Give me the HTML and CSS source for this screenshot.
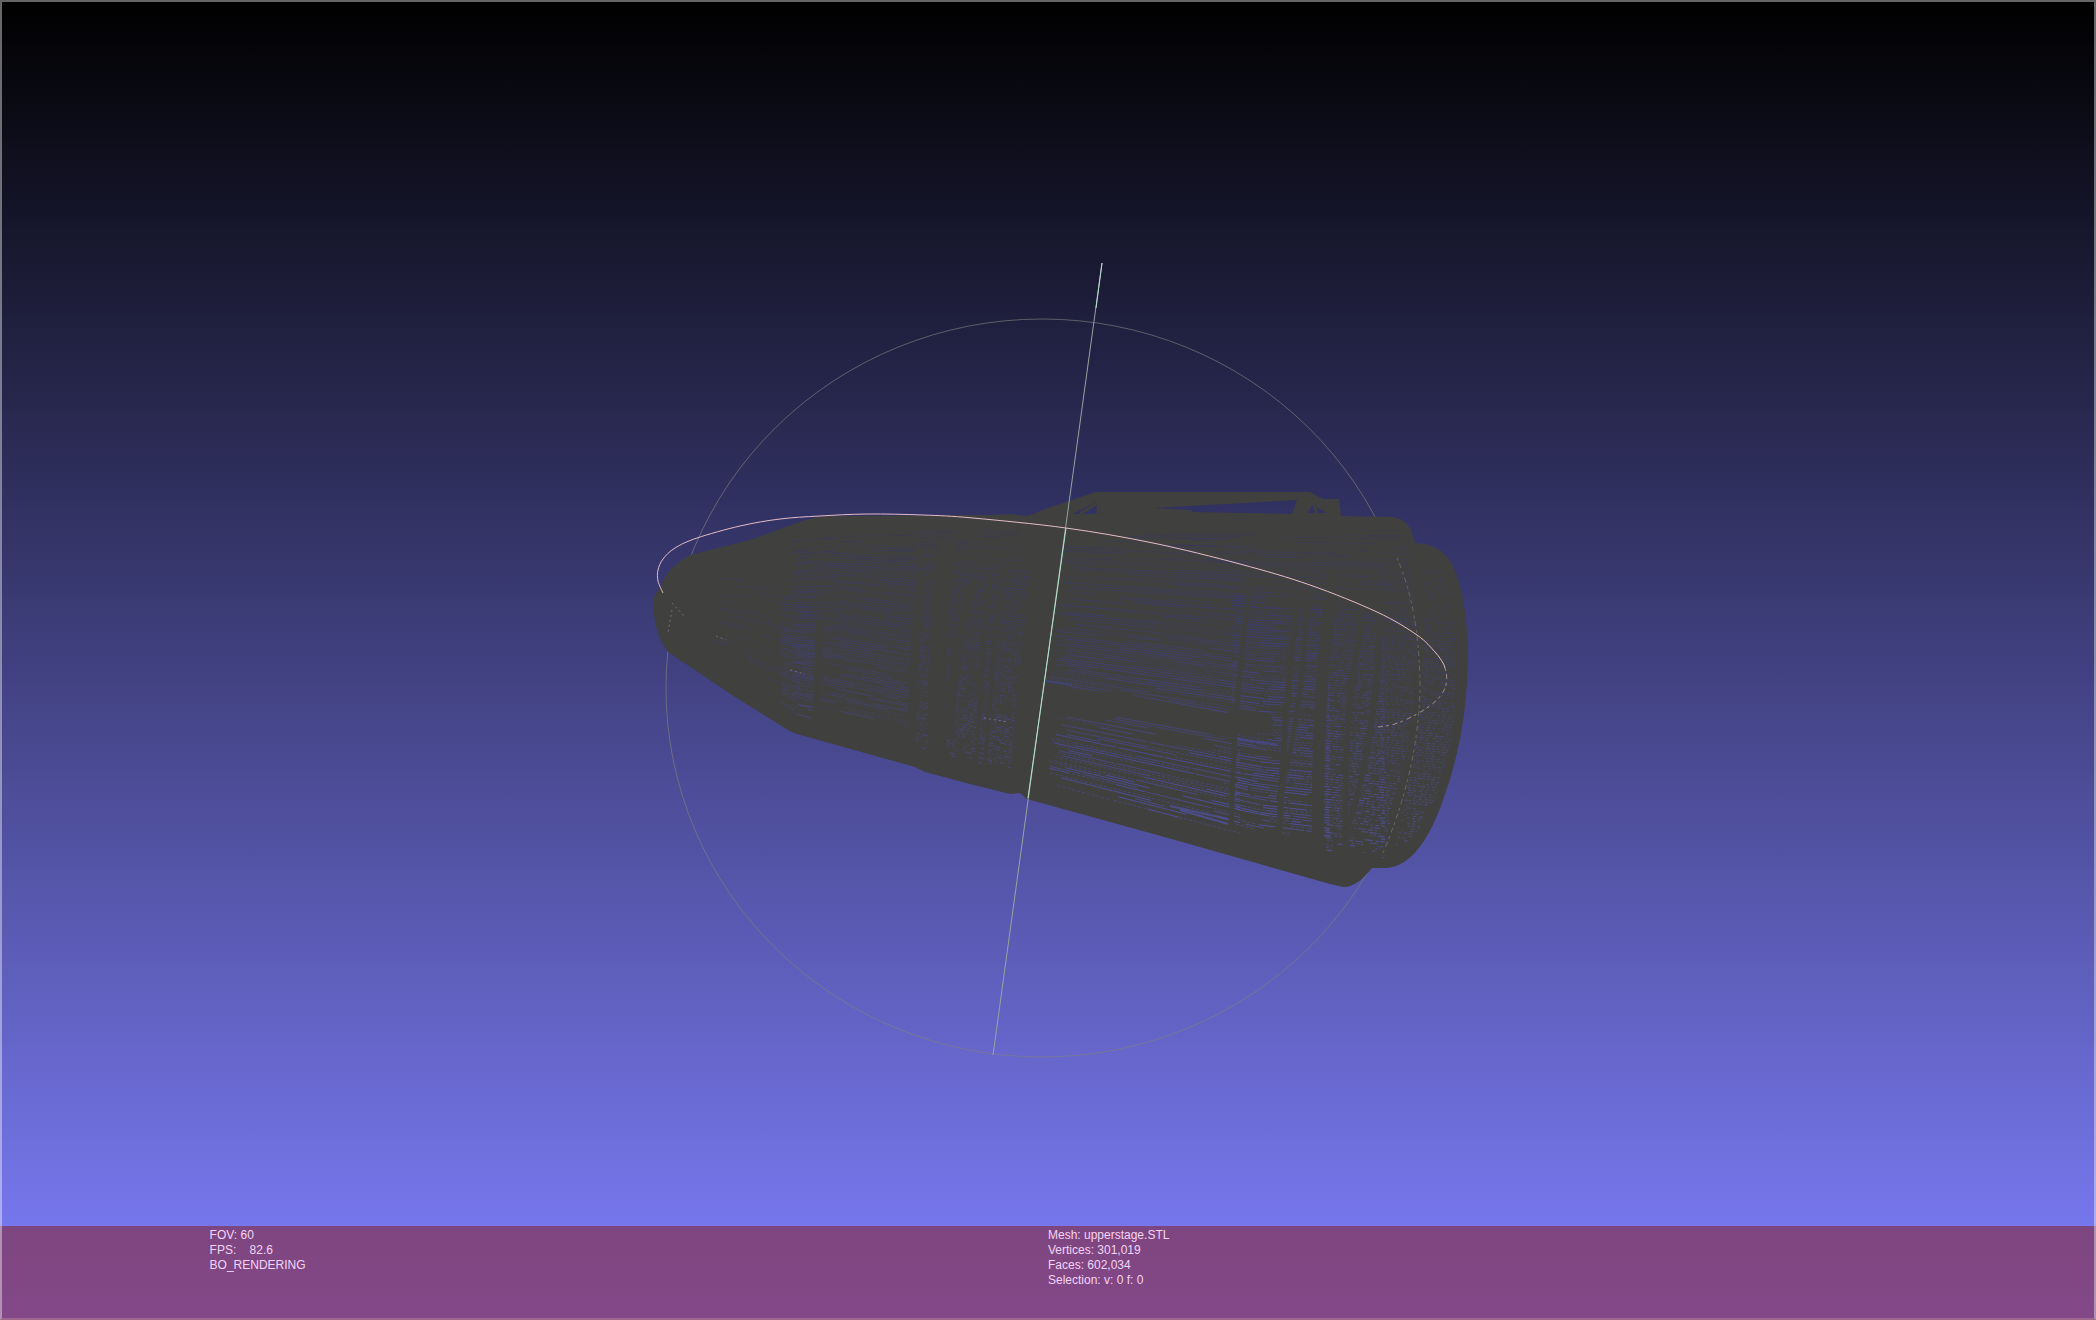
FILE: index.html
```html
<!DOCTYPE html>
<html lang="en">
<head>
<meta charset="utf-8">
<title>upperstage.STL</title>
<link rel="stylesheet" href="styles.css">
</head>
<body>
<main class="viewport">
  <svg class="scene" viewBox="0 0 2096 1226" role="img" aria-label="Wireframe of upperstage.STL with trackball">
    <defs>
      <linearGradient id="backdrop" gradientUnits="userSpaceOnUse" x1="0" y1="0" x2="0" y2="1320">
        <stop offset="0" stop-color="#000000"/>
        <stop offset="1" stop-color="#8080ff"/>
      </linearGradient>
      <clipPath id="hull-clip"><path d="M654 612 L658 590 L690 557 L820 524 L1395 524 L1418 552 Q1452 565 1460 640 Q1460 740 1430 810 Q1408 858 1372 860 L1345 868 L1028 789 L925 764 L797 726 L668 645Z"/></clipPath>
    </defs>
    <ellipse class="ring" cx="1042" cy="688" rx="376" ry="369"/>
    <path class="hull" fill-rule="evenodd" d="M653 605 L654 596 L660 587 L665 577 Q675 563 690 555 L750 540 L805 520 Q815 517 830 516 L985 515 L1010 514 L1028 516 L1045 509 L1096 492 L1310 492 L1323 499 L1339 499 L1341 516 L1393 517 Q1406 519 1411 530 L1415 543 Q1442 543 1454 568 Q1468 602 1468 660 Q1467 735 1443 800 Q1420 866 1386 868 L1372 868 Q1356 888 1343 887 L1330 884 L1168 838 L1027 799 L1020 793 L1010 794 L970 784 L925 772 L915 767 L797 734 Q790 732 780 725 L735 697 L668 652 Q655 636 653 605Z M1073 514 L1098 501 L1100 514Z M1153 508 L1297 500 L1292 514 L1193 512 L1190 510Z M1312 505 L1327 513 L1308 513Z"/>
    <path class="strut thin" d="M1080 514 L1099 502 M1098 500 V515 M1312 500 L1317 514"/>
    <g id="gaps" class="gaps" clip-path="url(#hull-clip)"></g>
    <path class="gaps bright" d="M1134 696 L1228 713 M1046 681 L1072 685 M1232 738 L1278 745 M1170 806 L1228 819 M1180 810 L1228 824"/>
    <g class="strut">
      <path stroke-width="5" d="M1250 590 Q1235 680 1231 830"/>
      <path stroke-width="6" d="M1298 590 Q1284 710 1279 845"/>
      <path stroke-width="5" d="M1308 590 Q1302 720 1278 800"/>
      <path stroke-width="12" d="M1335 570 Q1316 680 1318 860"/>
      <path stroke-width="6" d="M1362 620 Q1342 720 1346 850"/>
      <path stroke-width="6" d="M1380 590 Q1380 730 1347 830"/>
      <path stroke-width="6" d="M1420 560 Q1427 750 1383 856"/>
      <path stroke-width="6" d="M1418 690 Q1414 760 1390 820"/>
      <path stroke-width="8" d="M920 570 Q912 670 912 760"/>
      <path stroke-width="18" d="M947 540 Q934 650 938 760"/>
      <path stroke-width="9" d="M975 580 Q950 650 950 740"/>
      <path stroke-width="4" d="M990 570 Q980 680 976 770"/>
      <path stroke-width="4" d="M1003 570 Q990 680 985 770"/>
      <path stroke-width="26" d="M1046 540 L1034 660 L1022 785"/>
      <path stroke-width="7" d="M820 620 L815 735"/>
    </g>
    <path class="hull" d="M1045 687 L1120 693 L1232 714 L1263 713 L1272 715 L1273 732 L1230 735 L1130 716 L1045 701Z M968 668 h16 v14 h-12Z M1412 675 h12 v10 h-12Z"/>
    <path class="ring hidden-part" d="M1397 558 Q1420 610 1420 690 Q1418 770 1383 853"/>
    <path class="orbit hidden-part" d="M1445 668 C1452 690 1438 705 1403 721 Q1392 726 1377 727"/>
    <path class="orbit faint" d="M672 603 L684 616 M672 610 L668 632 M716 636 L726 640 M790 670 L805 674 M984 718 L1008 722"/>
    <path class="orbit" id="orbit"/>
    <path class="axis" d="M1102 263 L993 1055"/>
    <path class="axis-core" d="M1066 528 L1028 798 M1102 263 L1096 308"/>
  </svg>
</main>
<footer class="status">
  <div class="readout">FOV: 60
FPS:    82.6
BO_RENDERING</div>
  <div class="readout">Mesh: upperstage.STL
Vertices: 301,019
Faces: 602,034
Selection: v: 0 f: 0</div>
</footer>
<script src="scene.js"></script>
</body>
</html>
```
FILE: styles.css
```css
* { box-sizing: border-box; }
body {
  margin: 0;
  min-height: 100vh;
  display: flex;
  flex-direction: column;
  position: relative;
  background: linear-gradient(#000000, #8080ff);
  font-family: "Liberation Sans", Arial, sans-serif;
}
/* window edge left around the canvas */
body::after {
  content: "";
  position: absolute;
  inset: 0;
  border: 2px solid rgba(255, 255, 255, 0.4);
  border-bottom: 2px solid rgba(200, 150, 150, 0.4);
  pointer-events: none;
}
.viewport { flex: 1; min-height: 0; display: flex; }
.scene { display: block; width: 100%; flex: 1; }
.status {
  display: grid;
  grid-template-columns: 10% 40% 1fr;
  height: 94px;
  padding-top: 2px;
  background: linear-gradient(#7e4680, #824888);
  color: #f4d4f6;
  font-size: 12px;
  line-height: 15px;
}
.readout { white-space: pre; }
.readout:first-child { grid-column: 2; }
.hull { fill: #40403f; }
.strut { fill: none; stroke: #40403f; }
.thin { stroke-width: 3; }
.gaps { fill: none; stroke: url(#backdrop); stroke-width: 1; }
.bright { stroke-width: 2; stroke-opacity: 0.8; }
.ring { fill: none; stroke: #808080; stroke-opacity: 0.65; stroke-width: 1; }
.orbit { fill: none; stroke: #e4bdc8; stroke-width: 1; }
.hidden-part { stroke-width: 1; stroke-opacity: 0.6; stroke-dasharray: 3 3 5 4; }
.faint { stroke-width: 1; stroke-opacity: 0.35; stroke-dasharray: 2 3; }
.axis { stroke: #96a3a0; stroke-width: 1; }
.axis-core { fill: none; stroke: #b5e3cb; stroke-width: 1; }
```
FILE: scene.js
```js
// Smooth curve through the points of the horizontal trackball ring.
const ring = [[663,593],[658,581],[658,570],[663,559],[675,548],[697,538],[740,526],[780,519],[820,516],[867,514],[923,515],[973,518],[1066,528],[1153,543],[1240,564],[1310,585],[1377,612],[1417,635],[1435,652],[1443,663],[1445,668]];
let d = "M" + ring[0];
for (let i = 0; i < ring.length - 1; i++) {
  const a = ring[i - 1] || ring[i], b = ring[i], c = ring[i + 1], e = ring[i + 2] || c;
  d += " C" + [b[0] + (c[0] - a[0]) / 6, b[1] + (c[1] - a[1]) / 6,
    c[0] - (e[0] - b[0]) / 6, c[1] - (e[1] - b[1]) / 6, c[0], c[1]].join(" ");
}
document.getElementById("orbit").setAttribute("d", d);

// Seeded noise, so the mesh looks the same on each load.
let seed = 7;
const rnd = () => (seed = (seed * 16807) % 2147483647) / 2147483647;
const top_ = x => x < 820 ? 516 + (820 - x) * 0.26 : 516;
const bottom = x => x < 797 ? 733 - (797 - x) * 0.64
  : x < 1027 ? 733 + (x - 797) * 0.27
  : x < 1260 ? 798 + (x - 1027) * 0.28
  : 863 + (x - 1260) * 0.14;

// Rows of openings between wires: x range, share of the height, dash lengths, fill, opacity.
const zones = [
  [715, 800, 0.25, 0.84, 6, 30, 0.35, 0.28],
  [780, 815, 0.30, 0.92, 4, 18, 0.65, 0.55],
  [790, 915, 0.08, 0.88, 8, 50, 0.68, 0.50],
  [912, 1030, 0.20, 0.93, 2, 7, 0.72, 0.60],
  [912, 1030, 0.05, 0.30, 10, 40, 0.45, 0.30],
  [1048, 1240, 0.06, 0.30, 30, 110, 0.60, 0.42],
  [1048, 1240, 0.26, 0.70, 30, 110, 0.80, 0.62],
  [1048, 1240, 0.70, 0.93, 20, 90, 0.75, 0.80],
  [1170, 1410, 0.04, 0.30, 10, 60, 0.50, 0.36],
  [1230, 1330, 0.22, 0.91, 8, 34, 0.85, 0.80],
  [1325, 1385, 0.26, 0.94, 2, 8, 0.80, 0.75],
  [1380, 1452, 0.12, 0.32, 2, 6, 0.50, 0.35],
  [1380, 1455, 0.28, 0.90, 2, 4, 0.75, 0.62]
];
const group = document.getElementById("gaps");
for (const [x0, x1, v0, v1, short, long, fill, strength] of zones) {
  const levels = [[], [], []];
  const rows = (bottom(x1) - top_(x1)) * (v1 - v0) / 2.6;
  for (let r = 0; r < rows; r++) {
    const v = v0 + (v1 - v0) * r / rows;
    const bias = (0.6 + 0.6 * rnd()) * Math.min(1, 0.4 + 6 * Math.min(v - v0 + 0.02, v1 - v));
    let x = x0 + rnd() * short;
    while (x < x1) {
      const end = Math.min(x1, x + short + rnd() * (long - short));
      if (rnd() < fill * bias * 1.2) {
        const y = p => (top_(p) + (bottom(p) - top_(p)) * v).toFixed(1);
        levels[Math.floor(rnd() * 3)].push(`M${x.toFixed(1)} ${y(x)}L${end.toFixed(1)} ${y(end)}`);
      }
      x = end + 1 + rnd() * 2;
    }
  }
  levels.forEach((parts, i) => {
    const path = document.createElementNS("http://www.w3.org/2000/svg", "path");
    path.setAttribute("d", parts.join(""));
    path.setAttribute("stroke-opacity", strength * [0.7, 0.9, 1.2][i]);
    if (i === 0) path.setAttribute("stroke-dasharray", "3 2");
    group.append(path);
  });
}
```
